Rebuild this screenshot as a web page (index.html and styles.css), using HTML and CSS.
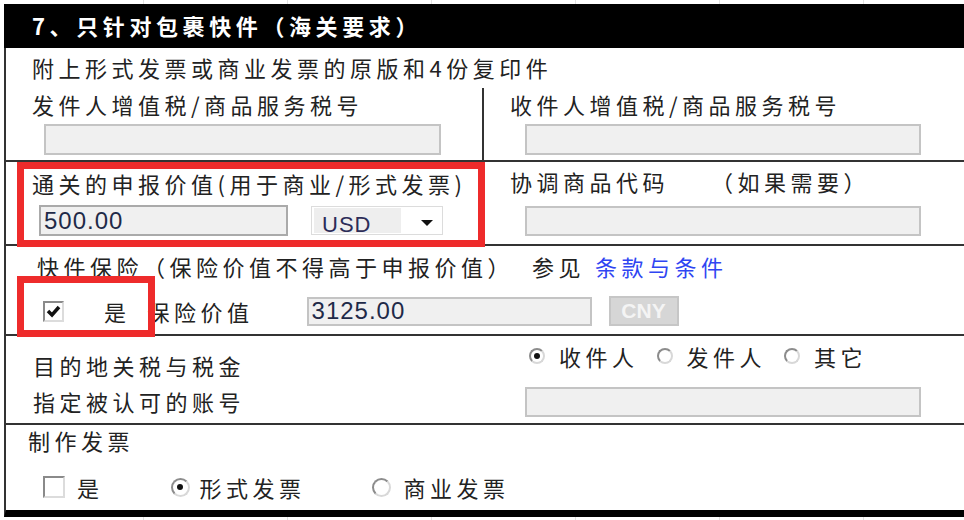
FILE: index.html
```html
<!DOCTYPE html>
<html lang="zh-CN">
<head>
  <meta charset="UTF-8" />
  <title>只针对包裹快件</title>
  <meta name="viewport" content="width=device-width, initial-scale=1.0" />
  <link rel="stylesheet" href="styles.css">
</head>
<body>
  <div class="panel">
    <div class="title">7、只针对包裹快件（海关要求）</div>

    <div class="sheet">
      <div class="note">附上形式发票或商业发票的原版和4份复印件</div>

      <!-- VAT numbers -->
      <div class="split vat-row">
        <div class="cell divided">
          <div class="label">发件人增值税/商品服务税号</div>
          <input class="field field-wide left-field" type="text" readonly />
        </div>
        <div class="cell right-cell">
          <div class="label">收件人增值税/商品服务税号</div>
          <input class="field field-right" type="text" readonly />
        </div>
      </div>

      <!-- declared value -->
      <div class="split value-row">
        <div class="cell divided">
          <div class="label value-label">通关的申报价值(用于商业/形式发票)</div>
          <div class="value-line">
            <input class="field field-num value-field" type="text" value="500.00" readonly />
            <div class="select">
              <span class="select-value">USD</span>
              <span class="select-arrow"></span>
            </div>
          </div>
        </div>
        <div class="cell right-cell">
          <div class="label code-label">协调商品代码　　（如果需要）</div>
          <input class="field field-right code-field" type="text" readonly />
        </div>
        <span class="mark mark-value"></span>
      </div>

      <!-- insurance -->
      <div class="block insurance-row">
        <div class="label insurance-label">快件保险（保险价值不得高于申报价值）<span class="see">参见</span><a class="link" href="#">条款与条件</a></div>
        <div class="insurance-line">
          <span class="check">
            <svg viewBox="0 0 16 16" width="16" height="16"><polyline points="2,8 6,12 13,4" fill="none" stroke="#111" stroke-width="3.5"/></svg>
          </span>
          <span class="yes">是</span>
          <span class="ins-label">保险价值</span>
          <input class="field field-num ins-field" type="text" value="3125.00" readonly />
          <span class="currency">CNY</span>
        </div>
        <span class="mark mark-insurance"></span>
      </div>

      <!-- duties -->
      <div class="split duty-row">
        <div class="cell duty-labels">
          <div>目的地关税与税金</div>
          <div>指定被认可的账号</div>
        </div>
        <div class="cell right-cell">
          <div class="radios">
            <span class="opt"><span class="radio is-on"></span>收件人</span>
            <span class="opt"><span class="radio"></span>发件人</span>
            <span class="opt"><span class="radio"></span>其它</span>
          </div>
          <input class="field field-right account-field" type="text" readonly />
        </div>
      </div>

      <!-- invoice -->
      <div class="block invoice-row">
        <div class="label invoice-label">制作发票</div>
        <div class="invoice-line">
          <span class="check check-big"></span>
          <span class="inv-yes">是</span>
          <span class="radio radio-big is-on inv-radio-1"></span>
          <span class="inv-text-1">形式发票</span>
          <span class="radio radio-big inv-radio-2"></span>
          <span class="inv-text-2">商业发票</span>
        </div>
      </div>
    </div>
  </div>
</body>
</html>
```

FILE: styles.css
```css
* {
  box-sizing: border-box;
}

body {
  margin: 0;
  width: 964px;
  height: 520px;
  overflow: hidden;
  padding-top: 4px;
  font-family: "Noto Sans CJK SC", sans-serif;
  color: #222;
  background: repeating-linear-gradient(to right, transparent 0 143px, #e2e2e2 143px 144px);
}

.panel {
  margin-left: 4px;
  background: #fff;
}

.title {
  height: 44px;
  line-height: 42px;
  padding-left: 28px;
  background: #000;
  color: #fff;
  font-size: 22px;
  font-weight: bold;
  letter-spacing: 4.6px;
}

.sheet {
  border-left: 2px solid #333;
  border-bottom: 7px solid #000;
  font-size: 22px;
  letter-spacing: 4.5px;
}

.note {
  height: 40px;
  line-height: 38px;
  padding-left: 26px;
}

.label {
  line-height: 30px;
  padding-left: 26px;
  white-space: nowrap;
}

.split {
  display: grid;
  grid-template-columns: 478px 1fr;
  border-bottom: 2px solid #333;
  position: relative;
}

.divided {
  border-right: 2px solid #333;
}

.right-cell {
  padding-left: 41px;
}

.right-cell .label {
  padding-left: 0;
  margin-left: -15px;
}

.field {
  display: block;
  height: 31px;
  padding: 0 3px;
  border: 2px solid #c4c4c4;
  background: #f0f0f0;
  outline: none;
}

.field-num {
  font-family: "Liberation Sans", sans-serif;
  font-size: 24px;
  letter-spacing: 1px;
  color: #1f2a48;
}

/* row: VAT */
.vat-row {
  height: 74px;
}

.vat-row .label {
  margin-top: 1px;
}

.vat-row .field {
  margin-top: 5px;
}

.field-wide {
  width: 397px;
}

.left-field {
  margin-left: 38px;
}

.field-right {
  width: 396px;
}

/* row: declared value */
.value-row {
  height: 84px;
}

.value-label {
  margin-top: 6px;
}

.value-line {
  display: flex;
  align-items: flex-start;
  margin-top: 7px;
}

.value-field {
  width: 249px;
  margin-left: 33px;
  border-color: #aaa;
}

.select {
  display: flex;
  align-items: flex-start;
  width: 132px;
  height: 29px;
  margin-left: 23px;
  margin-top: 1px;
  padding: 1px 2px;
  border: 1px solid #dcdcdc;
  background: #fff;
}

.select-value {
  width: 87px;
  height: 25px;
  overflow: hidden;
  padding: 6px 0 0 8px;
  line-height: 22px;
  background: #eee;
  font-family: "Liberation Sans", sans-serif;
  font-size: 22px;
  letter-spacing: 1px;
  color: #2c2c58;
}

.select-arrow {
  width: 0;
  height: 0;
  margin: 12px 0 0 20px;
  border-left: 6px solid transparent;
  border-right: 6px solid transparent;
  border-top: 6px solid #111;
}

.code-label {
  margin-top: 4px;
}

.code-field {
  margin-top: 10px;
  height: 30px;
}

.mark {
  position: absolute;
  border: 7px solid #ee2b2b;
  z-index: 2;
}

.mark-value {
  left: 11px;
  top: 0;
  width: 468px;
  height: 85px;
}

/* row: insurance */
.block {
  display: flow-root;
  position: relative;
}

.insurance-row {
  height: 90px;
  padding-top: 5px;
  border-bottom: 2px solid #333;
}

.insurance-label {
  padding-left: 31px;
}

.see {
  margin-left: 18px;
  margin-right: 10px;
}

.link {
  color: #2f45f2;
  text-decoration: none;
}

.insurance-line {
  display: flex;
  align-items: center;
  height: 30px;
  margin-top: 15px;
  white-space: nowrap;
}

.check {
  display: flex;
  align-items: center;
  justify-content: center;
  width: 21px;
  height: 21px;
  margin-left: 37px;
  border: 2px solid;
  border-color: #8a8a8a #dcdcdc #dcdcdc #8a8a8a;
  background: #fff;
}

.yes {
  margin-left: 40px;
}

.ins-label {
  margin-left: 17px;
}

.ins-field {
  width: 285px;
  height: 29px;
  margin-left: 53px;
}

.currency {
  width: 70px;
  height: 30px;
  margin-left: 17px;
  border: 2px solid #c6c6c6;
  background: #d6d6d6;
  color: #f4f4f4;
  font-family: "Liberation Sans", sans-serif;
  font-size: 21px;
  font-weight: bold;
  letter-spacing: 0;
  line-height: 26px;
  text-align: center;
}

.mark-insurance {
  left: 11px;
  top: 30px;
  width: 138px;
  height: 61px;
}

/* row: duties */
.duty-row {
  height: 89px;
}

.duty-labels {
  padding-top: 11px;
  padding-left: 27px;
  line-height: 36px;
}

.radios {
  display: flex;
  align-items: center;
  height: 30px;
  margin-top: 5px;
  padding-left: 4px;
  white-space: nowrap;
}

.opt {
  display: inline-flex;
  align-items: center;
  gap: 14px;
  margin-right: 18px;
}

.radio {
  position: relative;
  display: inline-block;
  flex: none;
  width: 16px;
  height: 16px;
  border-radius: 50%;
  border: 2px solid;
  border-color: #8c8c8c #d8d8d8 #d8d8d8 #8c8c8c;
  background: #fff;
}

.radio.is-on::after {
  content: "";
  position: absolute;
  left: 50%;
  top: 50%;
  width: 6px;
  height: 6px;
  margin: -3px 0 0 -3px;
  border-radius: 50%;
  background: #111;
}

.account-field {
  margin-top: 16px;
  height: 30px;
}

/* row: invoice */
.invoice-row {
  height: 85px;
}

.invoice-label {
  padding-left: 22px;
}

.invoice-line {
  display: flex;
  align-items: center;
  height: 30px;
  margin-top: 17px;
  white-space: nowrap;
}

.check-big {
  width: 22px;
  height: 22px;
}

.inv-yes {
  margin-left: 12px;
}

.radio-big {
  width: 19px;
  height: 19px;
}

.inv-radio-1 {
  margin-left: 67px;
}

.inv-text-1 {
  margin-left: 10px;
}

.inv-radio-2 {
  margin-left: 66px;
}

.inv-text-2 {
  margin-left: 13px;
}
```
